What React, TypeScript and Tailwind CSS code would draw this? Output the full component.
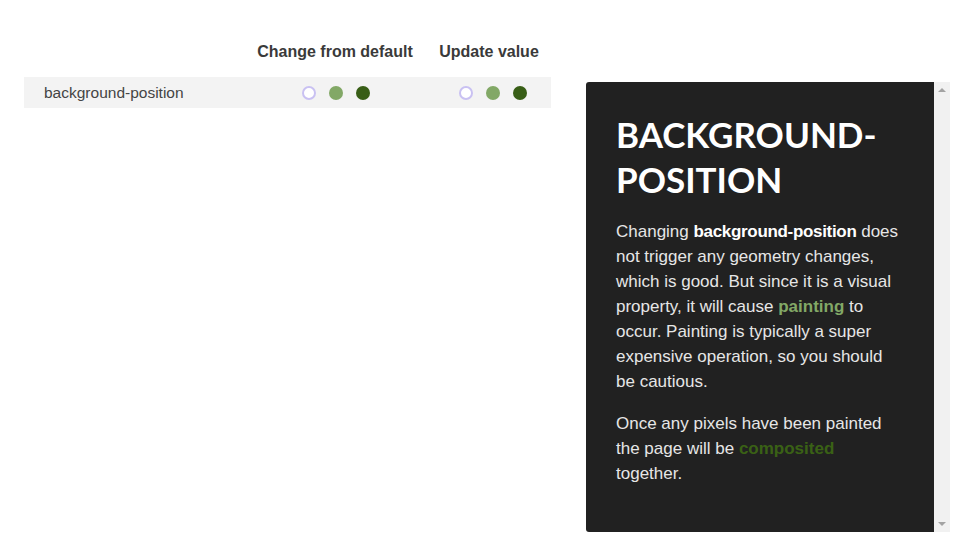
const Dots = () => (
  <div className="flex items-center gap-[13px]">
    <span className="h-[14px] w-[14px] rounded-full border-2 border-[#c9c1f2] bg-white" />
    <span className="h-[14px] w-[14px] rounded-full bg-[#82a866]" />
    <span className="h-[14px] w-[14px] rounded-full bg-[#385e16]" />
  </div>
);

const App = () => {
  return (
    <div className="flex h-[552px] w-[967px] bg-white font-['Liberation_Sans',Arial,sans-serif]">
      <div className="w-[551px] pl-[24px]">
        <div className="mt-[42px] flex h-[20px] items-center text-[16px] font-bold leading-[20px] text-[#3a3a3a]">
          <div className="w-[231px]" />
          <div className="w-[160px] text-center">Change from default</div>
          <div className="w-[136px] pl-[12px] text-center">Update value</div>
        </div>
        <div className="mt-[15px] flex h-[31px] items-center bg-[#f3f3f3]">
          <div className="w-[231px] pl-[20px] text-[15.5px] text-[#444]">background-position</div>
          <div className="flex w-[160px] justify-center pl-[1px]">
            <Dots />
          </div>
          <div className="flex w-[136px] justify-center pl-[20px]">
            <Dots />
          </div>
        </div>
      </div>

      <div className="mt-[82px] ml-[35px] flex h-[450px]">
        <div className="w-[348px] rounded-l-[3px] bg-[#212121] px-[30px] pt-[30px] text-[17px] leading-[25px] text-[#e6e6e6]">
          <h1 className="font-['Lato',sans-serif] text-[35px] font-bold leading-[45px] text-white">
            BACKGROUND-
            <br />
            POSITION
          </h1>
          <p className="mt-[17px]">
            Changing <b className="tracking-[-0.32px] text-white">background-position</b> does not trigger any geometry changes, which is good. But since it is a visual property, it will cause{" "}
            <b className="text-[#82a866]">painting</b> to occur. Painting is typically a super expensive operation, so you should be cautious.
          </p>
          <p className="mt-[17px]">
            Once any pixels have been painted the page will be <b className="text-[#3a6115]">composited</b> together.
          </p>
        </div>
        <div className="flex w-[16px] flex-col items-center justify-between bg-[#f1f1f1] py-[5px]">
          <svg width="8" height="5" viewBox="0 0 8 5">
            <path d="M0 5 L4 1 L8 5 Z" fill="#a3a3a3" />
          </svg>
          <svg width="8" height="5" viewBox="0 0 8 5">
            <path d="M0 0 L4 4 L8 0 Z" fill="#a3a3a3" />
          </svg>
        </div>
      </div>
    </div>
  );
};

export default App;
